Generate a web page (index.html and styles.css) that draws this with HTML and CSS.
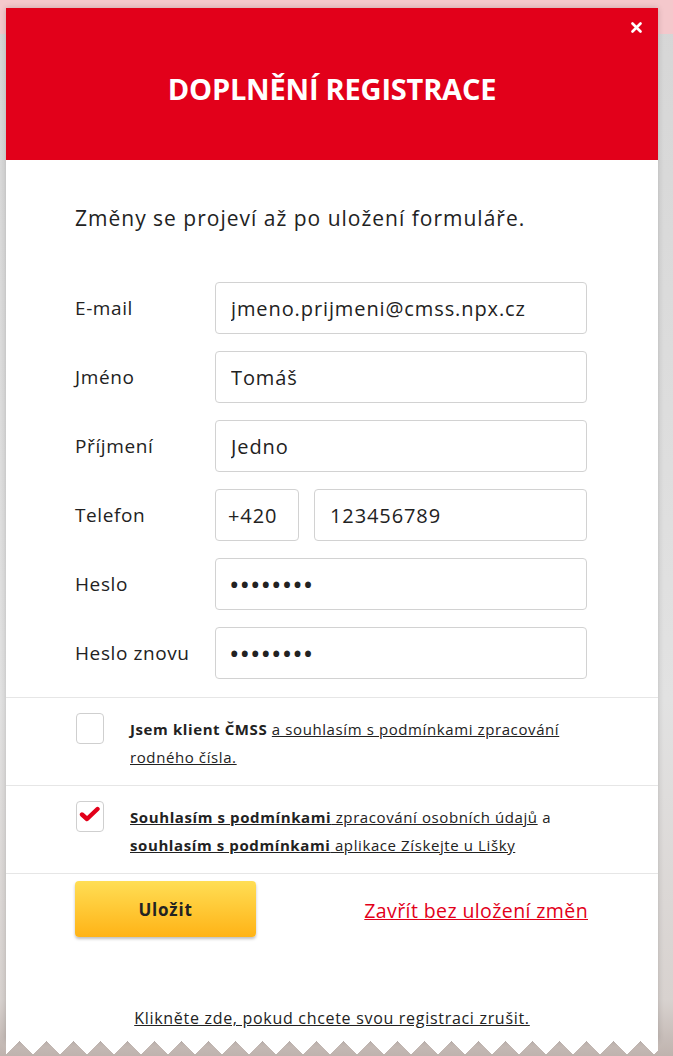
FILE: index.html
```html
<!DOCTYPE html>
<html lang="cs">
<head>
<meta charset="utf-8">
<title>Doplnění registrace</title>
<link rel="stylesheet" href="styles.css">
</head>
<body>
<div class="page">
  <div class="modal">
    <div class="modal-header">
      <h1 class="title">DOPLNĚNÍ REGISTRACE</h1>
      <button class="close" aria-label="Zavřít">
        <svg width="11" height="11" viewBox="0 0 11 11"><path d="M1.5 1.5 L9.5 9.5 M9.5 1.5 L1.5 9.5" stroke="#fff" stroke-width="2.6" stroke-linecap="round"/></svg>
      </button>
    </div>
    <div class="modal-body">
      <p class="intro">Změny se projeví až po uložení formuláře.</p>
      <form class="form">
        <div class="row"><label class="label">E-mail</label><div class="field"><input class="input" type="text" value="jmeno.prijmeni@cmss.npx.cz"></div></div>
        <div class="row"><label class="label">Jméno</label><div class="field"><input class="input" type="text" value="Tomáš"></div></div>
        <div class="row"><label class="label">Příjmení</label><div class="field"><input class="input" type="text" value="Jedno"></div></div>
        <div class="row"><label class="label">Telefon</label><div class="field phone"><input class="input prefix" type="text" value="+420"><input class="input" type="text" value="123456789"></div></div>
        <div class="row"><label class="label">Heslo</label><div class="field"><input class="input pass" type="password" value="12345678"></div></div>
        <div class="row"><label class="label">Heslo znovu</label><div class="field"><input class="input pass" type="password" value="12345678"></div></div>
      </form>
    </div>
    <div class="section check">
      <span class="box"></span>
      <p class="check-text"><b>Jsem klient ČMSS</b> <a href="#">a souhlasím s podmínkami zpracování rodného čísla.</a></p>
    </div>
    <div class="section check">
      <span class="box">
        <svg width="22" height="18" viewBox="0 0 22 18"><path d="M3 9.5 L8 14 L18.5 4" fill="none" stroke="#e2001a" stroke-width="4.4" stroke-linecap="round" stroke-linejoin="round"/></svg>
      </span>
      <p class="check-text"><a href="#"><b>Souhlasím s podmínkami</b> zpracování osobních údajů</a> a <a href="#"><b>souhlasím s podmínkami</b> aplikace Získejte u Lišky</a></p>
    </div>
    <div class="section actions">
      <button class="save" type="button">Uložit</button>
      <a class="cancel" href="#">Zavřít bez uložení změn</a>
    </div>
    <p class="unregister"><a href="#">Klikněte zde, pokud chcete svou registraci zrušit.</a></p>
    <div class="zigzag"></div>
  </div>
</div>
</body>
</html>
```
FILE: styles.css
```css
* { box-sizing: border-box; }
html, body { margin: 0; padding: 0; }
body {
  width: 673px;
  height: 1056px;
  overflow: hidden;
  font-family: "Open Sans", "DejaVu Sans", sans-serif;
  color: #222;
  background:
    linear-gradient(#f4c8cc 0, #f4c8cc 34px, transparent 34px),
    linear-gradient(to bottom, #d6d6d6 0, #e2e2e2 700px, #d8d2cf 1000px, #bfb3ae 1056px);
}
.page { padding: 8px 0 0 6px; }
.modal {
  position: relative;
  width: 652px;
  background: #fff;
  box-shadow: 0 0 6px rgba(0,0,0,0.18);
  padding-bottom: 12px;
}
.modal-header {
  position: relative;
  height: 152px;
  background: #e2001a;
  display: flex;
  align-items: center;
  justify-content: center;
}
.title {
  margin: 0;
  color: #fff;
  font-size: 29px;
  font-weight: 700;
  letter-spacing: -0.2px;
  padding-top: 8px;
}
.close {
  position: absolute;
  top: 14px;
  right: 16px;
  border: 0;
  background: none;
  padding: 0;
  width: 11px;
  height: 11px;
  line-height: 0;
  cursor: pointer;
}
.modal-body { padding: 0 71px 0 69px; }
.intro {
  margin: 0;
  padding-top: 44px;
  font-size: 21px;
  letter-spacing: 1px;
  line-height: 28px;
  color: #222;
}
.form { padding-top: 50px; padding-bottom: 1px; }
.row {
  display: grid;
  grid-template-columns: 140px 372px;
  align-items: center;
  height: 52px;
  margin-bottom: 17px;
}
.label { font-size: 19px; letter-spacing: 0.6px; color: #222; }
.field { display: flex; gap: 15px; }
.input {
  width: 100%;
  height: 52px;
  border: 1px solid #d2d2d2;
  border-radius: 4px;
  padding: 0 15px;
  font-family: inherit;
  font-size: 20px;
  letter-spacing: 0.9px;
  color: #222;
  background: #fff;
  outline: none;
}
.phone .prefix { width: 84px; flex: none; padding: 0 12px; }
.pass { font-size: 28px; letter-spacing: 0; padding-left: 13px; }
.section {
  border-top: 1px solid #e6e6e6;
}
.check {
  display: flex;
  align-items: flex-start;
  padding: 15px 20px 13px 70px;
  min-height: 88px;
}
.box {
  flex: none;
  width: 28px;
  height: 31px;
  border: 1px solid #cfcfcf;
  border-radius: 4px;
  margin-right: 26px;
  display: flex;
  align-items: center;
  justify-content: center;
  padding-bottom: 6px;
}
.check-text {
  margin: 2px 0 0;
  width: 452px;
  font-size: 15px;
  letter-spacing: 0.6px;
  line-height: 28px;
  color: #222;
}
.check-text a { color: #222; text-decoration: underline; }
.check-text b { font-weight: 700; }
.actions {
  display: flex;
  align-items: center;
  justify-content: space-between;
  padding: 7px 70px 0 69px;
}
.save {
  width: 181px;
  height: 56px;
  border: 0;
  border-radius: 4px;
  background: linear-gradient(#ffde55, #ffb316);
  box-shadow: 0 2px 3px rgba(0,0,0,0.25);
  font-family: inherit;
  font-size: 17px;
  letter-spacing: 0.8px;
  font-weight: 700;
  color: #222;
}
.cancel {
  color: #e2001a;
  font-size: 19.5px;
  letter-spacing: 0.4px;
  text-decoration: underline;
  padding-top: 2px;
}
.unregister {
  margin: 0;
  padding-top: 70px;
  text-align: center;
  font-size: 16px;
  letter-spacing: 0.7px;
  line-height: 22px;
}
.unregister a { color: #222; text-decoration: underline; }
.zigzag {
  position: absolute;
  left: 0;
  right: 0;
  top: 100%;
  height: 18px;
  background-image: linear-gradient(135deg, #fff 50%, transparent 50%), linear-gradient(225deg, #fff 50%, transparent 50%);
  background-size: 27px 27px;
  background-repeat: repeat-x;
  background-position: 0 -13px, 0 -13px;
}
```
